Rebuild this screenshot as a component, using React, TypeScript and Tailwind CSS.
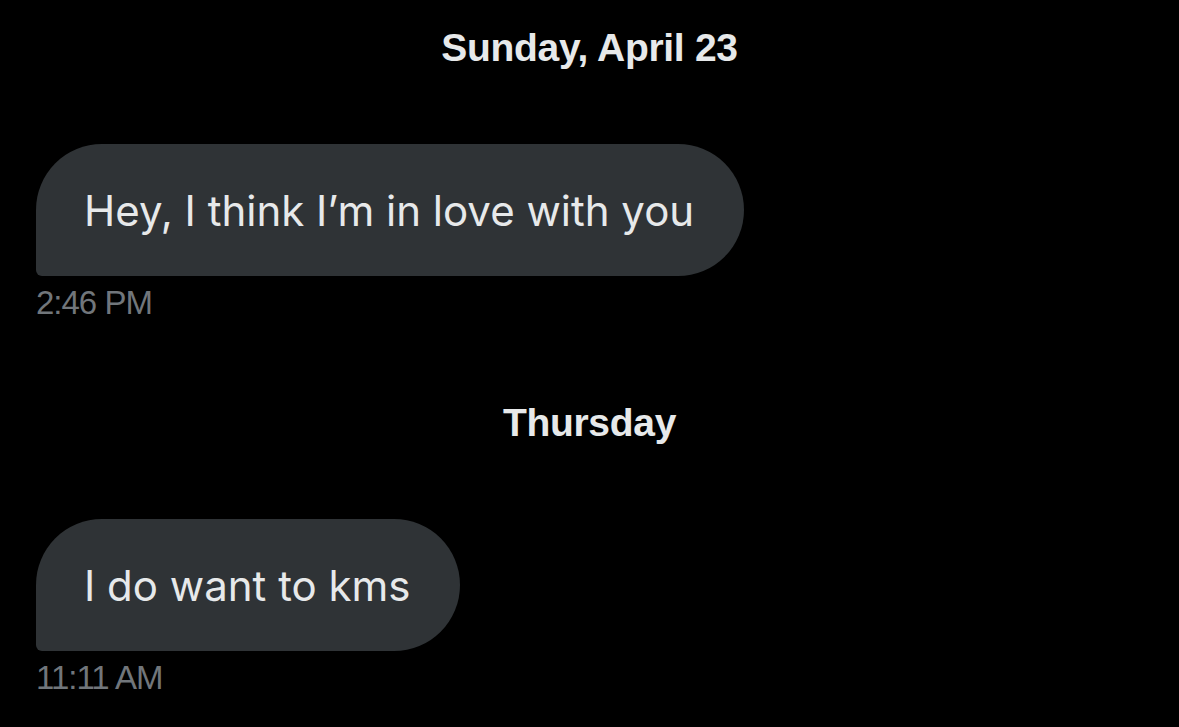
const dateFont = { fontFamily: '"Liberation Sans", Arial, sans-serif' }

function DayLabel({ label, className }: { label: string; className: string }) {
  return (
    <div className={`text-center text-[39px] leading-[44px] font-bold tracking-[-0.3px] text-[#e7e9ea] ${className}`} style={dateFont}>
      {label}
    </div>
  )
}

function Bubble({ text, time }: { text: string; time: string }) {
  return (
    <div className="flex flex-col items-start">
      <div className="flex h-[132px] items-center rounded-[66px] rounded-bl-[6px] bg-[#2f3336] pl-[48px] pr-[50px] font-['Inter',sans-serif] text-[42px] text-[#e7e9ea]">
        {text}
      </div>
      <div className="mt-[9px] font-['Liberation_Sans',Arial,sans-serif] text-[33px] leading-[36px] tracking-[-1px] text-[#71767b]">
        {time}
      </div>
    </div>
  )
}

export default function App() {
  return (
    <div className="h-[727px] w-[1179px] overflow-hidden bg-black px-[36px]">
      <DayLabel label="Sunday, April 23" className="pt-[26px]" />
      <div className="mt-[74px]">
        <Bubble text="Hey, I think I’m in love with you" time="2:46 PM" />
      </div>
      <DayLabel label="Thursday" className="mt-[80px]" />
      <div className="mt-[74px]">
        <Bubble text="I do want to kms" time="11:11 AM" />
      </div>
    </div>
  )
}
